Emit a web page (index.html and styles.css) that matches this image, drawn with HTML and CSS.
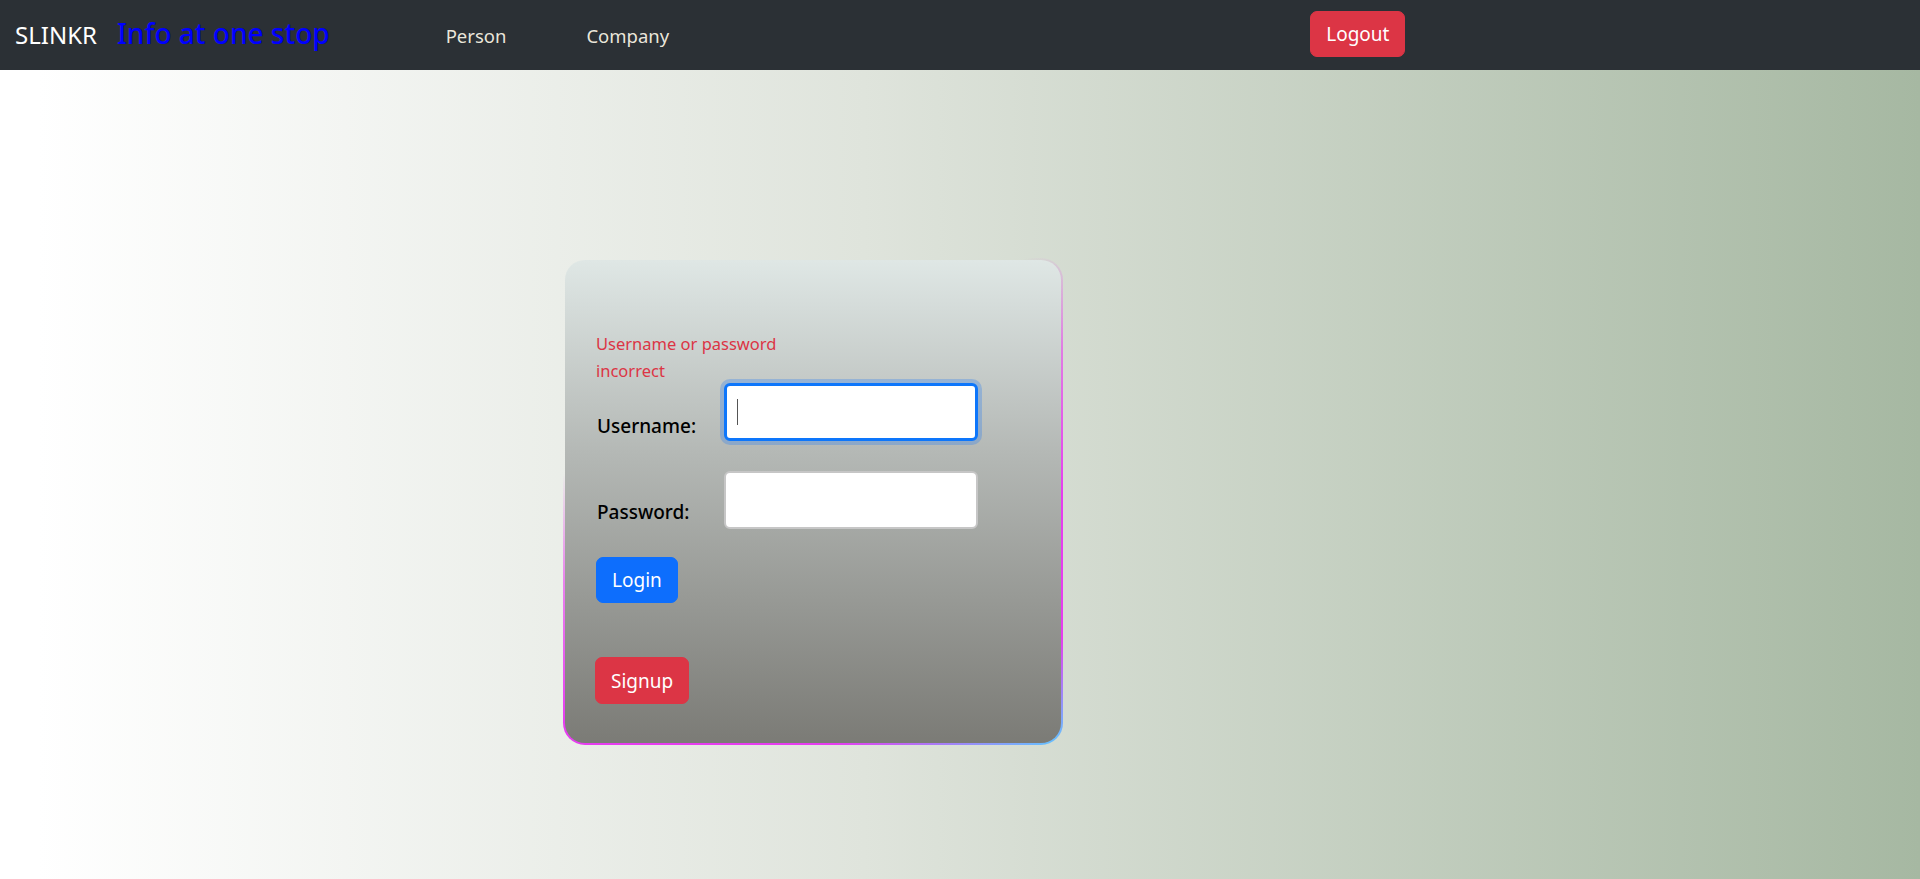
FILE: index.html
```html
<!DOCTYPE html>
<html lang="en">
<head>
<meta charset="utf-8">
<title>SLINKR</title>
<link rel="stylesheet" href="styles.css">
</head>
<body>
<nav class="navbar">
  <a class="brand">SLINKR</a>
  <span class="tagline">Info at one stop</span>
  <a class="nav-link person">Person</a>
  <a class="nav-link company">Company</a>
  <button class="btn btn-red logout">Logout</button>
</nav>
<main class="main">
  <div class="card">
    <p class="error">Username or password incorrect</p>
    <div class="row">
      <label class="label">Username:</label>
      <div class="input focused"><span class="caret"></span></div>
    </div>
    <div class="row row-2">
      <label class="label">Password:</label>
      <div class="input"></div>
    </div>
    <button class="btn btn-blue login">Login</button>
    <button class="btn btn-red signup">Signup</button>
  </div>
</main>
</body>
</html>
```
FILE: styles.css
```css
* { box-sizing: border-box; }
html, body { margin: 0; padding: 0; }
body {
  width: 1920px;
  height: 879px;
  overflow: hidden;
  font-family: "Noto Sans", "Open Sans", sans-serif;
  background: linear-gradient(90deg, #ffffff 2%, #dfe4dc 45%, #a6b8a2 100%);
}
.navbar {
  height: 70px;
  background: #2b3035;
  display: flex;
  align-items: center;
  padding: 0 15px;
}
.brand {
  color: #fff;
  font-size: 24px;
  line-height: 36px;
  margin-right: 20px;
}
.tagline {
  color: #0000ff;
  font-size: 28px;
  line-height: 40px;
  margin-top: -5px;
  font-weight: 500;
}
.nav-link {
  color: rgba(255, 250, 235, 0.92);
  font-size: 18.5px;
  line-height: 30px;
  margin-top: 2px;
}
.person { margin-left: 116px; }
.company { margin-left: 80px; }
.btn {
  border: 1px solid transparent;
  border-radius: 7px;
  color: #fff;
  font-family: inherit;
  font-size: 19px;
  line-height: 30px;
  padding: 7px 15px;
  cursor: pointer;
  display: block;
}
.btn-red { background: #dc3545; border-color: #dc3545; }
.btn-blue { background: #0d6efd; border-color: #0d6efd; }
.logout { margin-left: 641px; height: 46px; margin-top: -3px; }
.main {
  padding-top: 188px;
  padding-left: 563px;
}
.card {
  width: 500px;
  height: 487px;
  border: 2px solid transparent;
  border-radius: 22px;
  background:
    linear-gradient(180deg, #dfe7e5 0%, #b4b8b5 40%, #7b7b76 100%) padding-box,
    linear-gradient(155deg, rgba(232, 60, 240, 0) 30%, rgba(232, 60, 240, 0.6) 45%, #e63cf0 65%, #e63cf0 85%, #5ec8ff 100%) border-box;
  padding: 70px 30px 0 31px;
}
.error {
  margin: 0;
  width: 190px;
  color: #dc3545;
  font-size: 16.5px;
  line-height: 27px;
}
.row {
  display: flex;
  align-items: flex-end;
  margin-top: -1px;
}
.row-2 { margin-top: 30px; }
.label {
  width: 128px;
  font-size: 19px;
  font-weight: 500;
  line-height: 30px;
  color: #000;
  padding-left: 1px;
}
.row-2 .label { margin-bottom: 2px; }
.input {
  width: 254px;
  height: 58px;
  background: #fff;
  border: 2px solid #c6c6c6;
  border-radius: 6px;
  display: flex;
  align-items: center;
  padding-left: 11px;
}
.input.focused {
  border: 3px solid #0d76fb;
  box-shadow: 0 0 0 4px rgba(13, 110, 253, 0.25);
  padding-left: 10px;
}
.caret {
  width: 1px;
  height: 26px;
  background: #555;
}
.login {
  margin-top: 28px;
  height: 46px;
}
.signup {
  margin-top: 54px;
  margin-left: -1px;
  height: 47px;
}
```
